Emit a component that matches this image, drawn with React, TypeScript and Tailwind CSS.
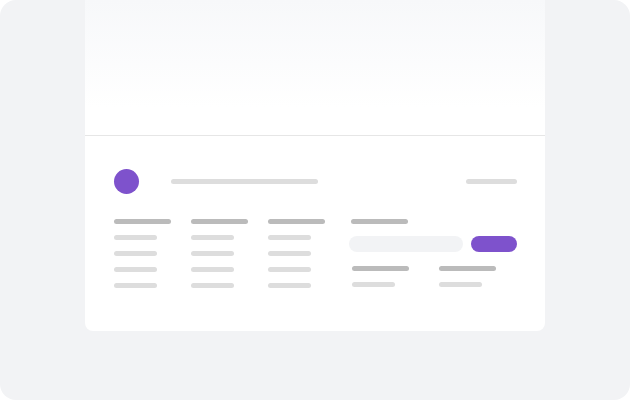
import React from "react";

const Dark = ({ w }: { w: string }) => <div className={`h-[5px] rounded-full bg-[#bbbbbb] ${w}`} />;

function Col() {
  return (
    <div className="flex w-[57px] flex-col gap-[11px]">
      <div className="h-[5px] w-[57px] rounded-full bg-[#bbbbbb]" />
      <div className="h-[5px] w-[43px] rounded-full bg-[#dddddd]" />
      <div className="h-[5px] w-[43px] rounded-full bg-[#dddddd]" />
      <div className="h-[5px] w-[43px] rounded-full bg-[#dddddd]" />
      <div className="h-[5px] w-[43px] rounded-full bg-[#dddddd]" />
    </div>
  );
}

export default function App() {
  return (
    <div className="h-[400px] w-[630px] overflow-hidden rounded-2xl bg-[#f2f3f5]">
      <div className="ml-[85px] flex h-[331px] w-[460px] flex-col overflow-hidden rounded-b-lg bg-white">
        <div className="h-[136px] shrink-0 border-b border-[#e6e6e6] bg-gradient-to-b from-[#f7f8fa] to-white to-[80%]" />
        <div className="flex flex-col pl-[29px] pr-[28px] pt-[33px]">
          <div className="flex items-center">
            <div className="h-[25px] w-[25px] rounded-full bg-[#7e52cc]" />
            <div className="ml-[32px] h-[5px] w-[147px] rounded-full bg-[#dddddd]" />
            <div className="ml-auto h-[5px] w-[51px] rounded-full bg-[#dddddd]" />
          </div>
          <div className="mt-[25px] flex">
            <div className="flex gap-[20px]">
              <Col />
              <Col />
              <Col />
            </div>
            <div className="ml-[24px] flex w-[168px] flex-col">
              <div className="ml-[2px]">
                <Dark w="w-[57px]" />
              </div>
              <div className="mt-[12px] flex">
                <div className="h-[16px] w-[114px] rounded-full bg-[#f2f3f5]" />
                <div className="ml-[8px] h-[16px] w-[46px] rounded-full bg-[#7e52cc]" />
              </div>
              <div className="ml-[3px] mt-[14px] flex gap-[30px]">
                <div className="flex flex-col gap-[11px]">
                  <div className="h-[5px] w-[57px] rounded-full bg-[#bbbbbb]" />
                  <div className="h-[5px] w-[43px] rounded-full bg-[#dddddd]" />
                </div>
                <div className="flex flex-col gap-[11px]">
                  <div className="h-[5px] w-[57px] rounded-full bg-[#bbbbbb]" />
                  <div className="h-[5px] w-[43px] rounded-full bg-[#dddddd]" />
                </div>
              </div>
            </div>
          </div>
        </div>
      </div>
    </div>
  );
}
